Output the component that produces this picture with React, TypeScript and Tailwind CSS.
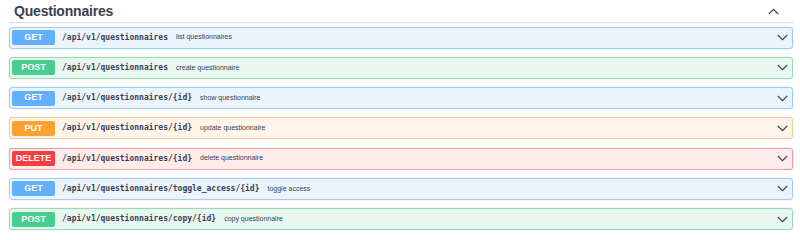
const ops = [
  { method: "GET", path: "/api/v1/questionnaires", desc: "list questionnaires" },
  { method: "POST", path: "/api/v1/questionnaires", desc: "create questionnaire" },
  { method: "GET", path: "/api/v1/questionnaires/{id}", desc: "show questionnaire" },
  { method: "PUT", path: "/api/v1/questionnaires/{id}", desc: "update questionnaire" },
  { method: "DELETE", path: "/api/v1/questionnaires/{id}", desc: "delete questionnaire" },
  { method: "GET", path: "/api/v1/questionnaires/toggle_access/{id}", desc: "toggle access" },
  { method: "POST", path: "/api/v1/questionnaires/copy/{id}", desc: "copy questionnaire" },
];

const styles: Record<string, { row: string; badge: string }> = {
  GET: { row: "bg-[#ebf3fb] border-[#9fcdfb]", badge: "bg-[#61affe]" },
  POST: { row: "bg-[#e8f6f0] border-[#93dbb9]", badge: "bg-[#49cc90]" },
  PUT: { row: "bg-[#fff5ea] border-[#fbc98e]", badge: "bg-[#fca130]" },
  DELETE: { row: "bg-[#feebeb] border-[#f59a9a]", badge: "bg-[#f93e3e]" },
};

function Chevron({ up = false }: { up?: boolean }) {
  return (
    <svg width="11" height="7" viewBox="0 0 11 7" className="shrink-0">
      <path
        d={up ? "M0.8 6 L5.5 1.3 L10.2 6" : "M0.8 1 L5.5 5.7 L10.2 1"}
        fill="none"
        stroke="#3b4151"
        strokeWidth="1.1"
      />
    </svg>
  );
}

export default function App() {
  return (
    <div className="w-[800px] h-[240px] bg-white pl-[9px] pr-[7px] font-['Liberation_Sans',Arial,sans-serif] text-[#3b4151]">
      <div className="flex h-[23px] items-center justify-between border-b border-[#d8dbe0] pl-[5px] pr-[14px]">
        <h3 className="text-[14px] font-bold leading-none tracking-[-0.2px]">Questionnaires</h3>
        <Chevron up />
      </div>
      <div className="flex flex-col gap-[8.3px] pt-[3.5px]">
        {ops.map((op, i) => {
          const s = styles[op.method];
          return (
            <div
              key={i}
              className={`flex h-[22px] items-center rounded-[3px] border pl-[2px] pr-[4px] shadow-[0_0_2px_rgba(0,0,0,0.12)] ${s.row}`}
            >
              <span
                className={`flex h-[15px] w-[43px] items-center justify-center rounded-[2px] text-[9px] font-bold text-white ${s.badge}`}
              >
                {op.method}
              </span>
              <span className="ml-[7px] font-['DejaVu_Sans_Mono',monospace] text-[8px] font-bold">
                {op.path}
              </span>
              <span className="ml-[8px] text-[7px]">{op.desc}</span>
              <span className="ml-auto flex items-center">
                <Chevron />
              </span>
            </div>
          );
        })}
      </div>
    </div>
  );
}
